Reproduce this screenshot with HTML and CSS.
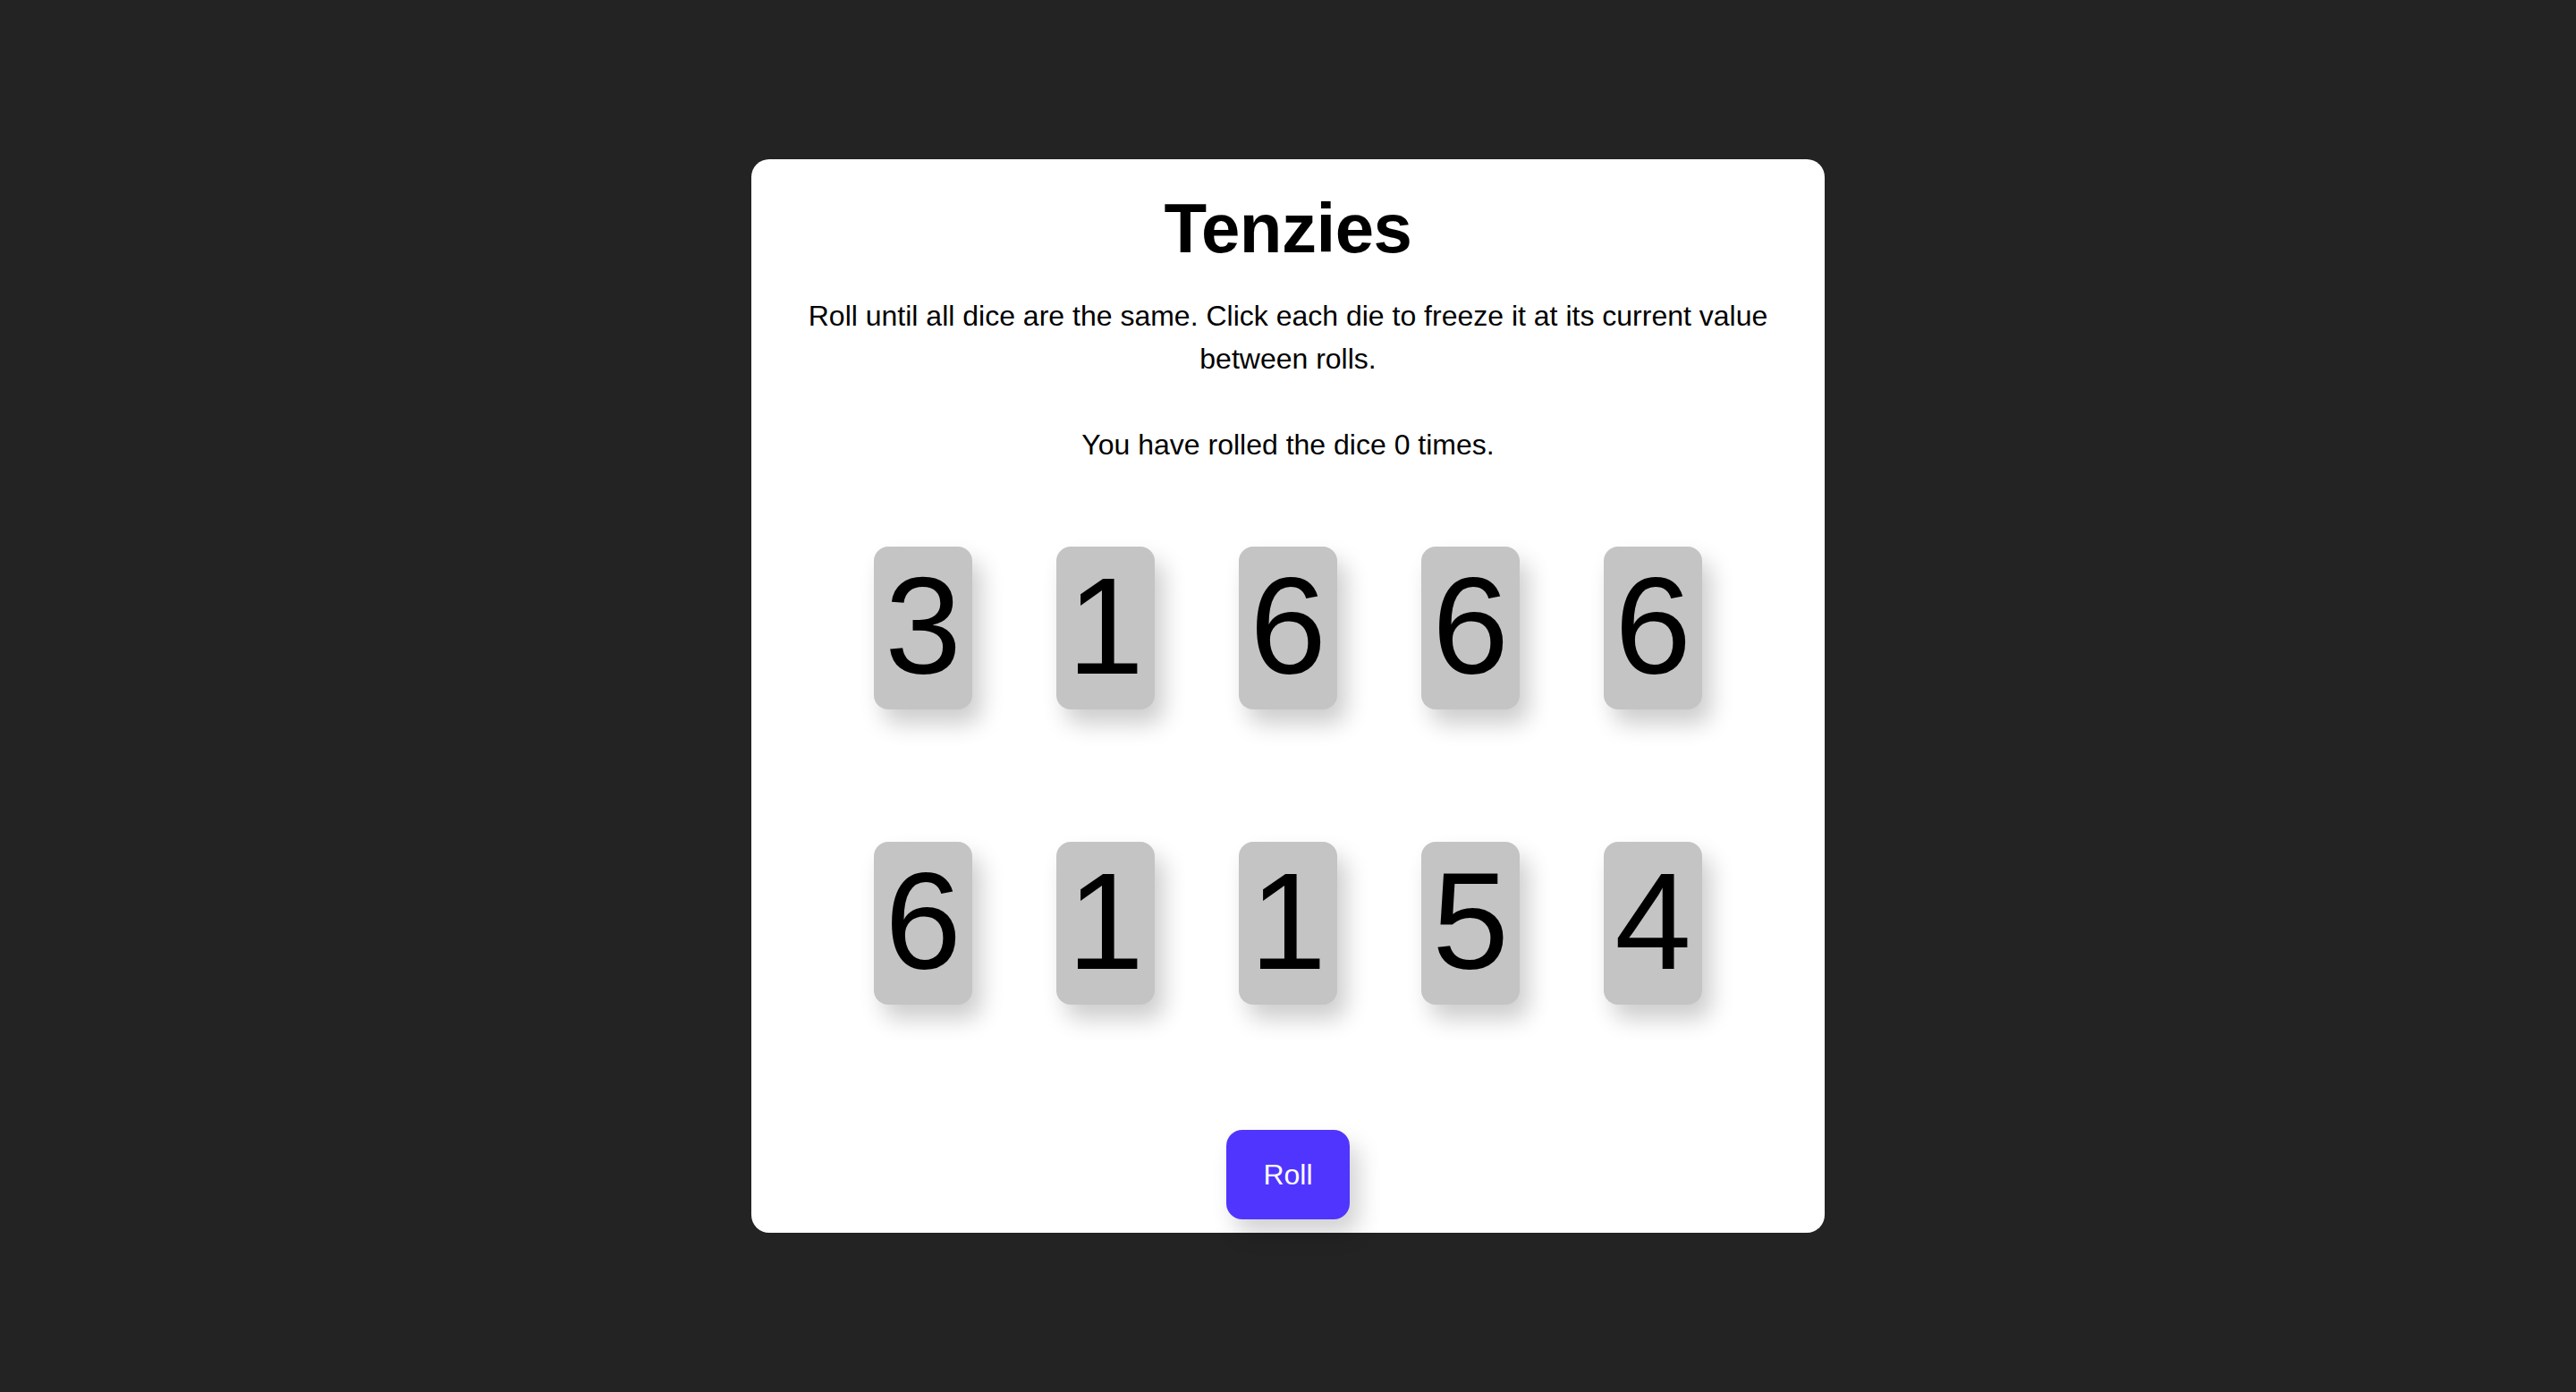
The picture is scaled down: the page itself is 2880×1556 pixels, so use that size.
FILE: index.html
```html
<!DOCTYPE html>
<html lang="en">
<head>
<meta charset="utf-8">
<title>Tenzies</title>
<link rel="stylesheet" href="styles.css">
</head>
<body>
<main class="card">
  <h1 class="title">Tenzies</h1>
  <p class="instructions">Roll until all dice are the same. Click each die to freeze it at its current value between rolls.</p>
  <p class="count">You have rolled the dice 0 times.</p>
  <div class="dice">
    <button class="die">3</button>
    <button class="die">1</button>
    <button class="die">6</button>
    <button class="die">6</button>
    <button class="die">6</button>
    <button class="die">6</button>
    <button class="die">1</button>
    <button class="die">1</button>
    <button class="die">5</button>
    <button class="die">4</button>
  </div>
  <button class="roll">Roll</button>
</main>
</body>
</html>
```

FILE: styles.css
```css
html, body {
  margin: 0;
  padding: 0;
}

body {
  background: #232323;
  min-height: 100vh;
  display: flex;
  align-items: center;
  justify-content: center;
  font-family: "Liberation Sans", Arial, Helvetica, sans-serif;
  color: #000;
}

.card {
  box-sizing: border-box;
  width: 1200px;
  background: #ffffff;
  border-radius: 20px;
  padding: 0 60px 15px;
  display: flex;
  flex-direction: column;
  align-items: center;
  text-align: center;
}

.title {
  margin: 38px 0 0;
  font-size: 78px;
  line-height: 78px;
  font-weight: 700;
  letter-spacing: -0.5px;
}

.instructions {
  margin: 35px 0 0;
  font-size: 32px;
  line-height: 48px;
}

.count {
  margin: 48px 0 0;
  font-size: 32px;
  line-height: 48px;
}

.dice {
  margin-top: 90px;
  display: grid;
  grid-template-columns: repeat(5, 110px);
  grid-auto-rows: 182px;
  column-gap: 94px;
  row-gap: 148px;
}

.die {
  border: none;
  padding: 0 0 4px;
  margin: 0;
  background: #c4c4c4;
  border-radius: 16px;
  box-shadow: 10px 16px 26px rgba(0, 0, 0, 0.2);
  font-family: "Liberation Sans", Arial, Helvetica, sans-serif;
  font-size: 154px;
  line-height: 1;
  color: #000;
  display: flex;
  align-items: center;
  justify-content: center;
  cursor: pointer;
}

.roll {
  margin-top: 140px;
  width: 138px;
  height: 100px;
  border: none;
  border-radius: 18px;
  background: #5035ff;
  color: #ffffff;
  font-family: "Liberation Sans", Arial, Helvetica, sans-serif;
  font-size: 32px;
  box-shadow: 10px 16px 26px rgba(0, 0, 0, 0.18);
  cursor: pointer;
}
```
